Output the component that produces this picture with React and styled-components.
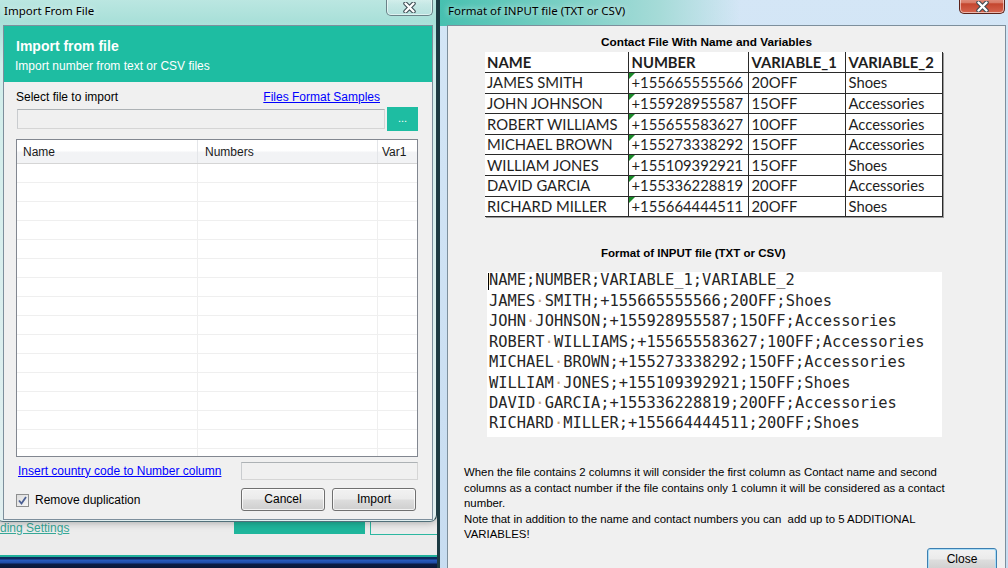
import React from "react";
import styled, { createGlobalStyle } from "styled-components";

const GlobalStyle = createGlobalStyle`
  html, body {
    margin: 0;
    padding: 0;
  }
  body {
    width: 1008px;
    height: 568px;
    overflow: hidden;
    background: #ececec;
    font-family: "Liberation Sans", Arial, sans-serif;
  }
`;

const Desktop = styled.div`
  position: relative;
  width: 1008px;
  height: 568px;
  overflow: hidden;
  display: flex;
  flex-direction: column;
  background: #ececec;
`;

const AppArea = styled.div`
  flex: 1;
  background: linear-gradient(180deg, #4fc3b3 0px, #9fdad2 60px, #ececec 140px);
`;

const BackStrip = styled.div`
  height: 37px;
  display: flex;
  align-items: flex-start;
  padding-top: 2px;
  box-sizing: border-box;
  gap: 5px;
`;

const BackLink = styled.span`
  flex: 0 0 229px;
  font-size: 12px;
  line-height: 14px;
  padding-top: 1px;
  color: #36a796;
  text-decoration: underline;
`;

const BackBar = styled.div`
  width: 131px;
  height: 14px;
  background: #1fb69c;
`;

const BackBox = styled.div`
  width: 70px;
  height: 14px;
  border-left: 1px solid #2cb7a1;
  border-bottom: 1px solid #2cb7a1;
`;

const Taskbar = styled.div`
  height: 11px;
  border-top: 2px solid #20b09b;
  background: linear-gradient(
    180deg,
    #0d2a5e 0px,
    #0d2a5e 2px,
    #2a5cc0 3px,
    #1d4aa4 6px,
    #0c1d46 7px,
    #0a1838 100%
  );
`;

const Window = styled.div`
  position: absolute;
  top: -6px;
  box-sizing: border-box;
  display: flex;
  flex-direction: column;
  border-radius: 7px;
`;

const LeftFrame = styled(Window)`
  left: -4px;
  width: 441px;
  height: 528px;
  padding: 0 3px 1px 6px;
  border: 1px solid #51707a;
  border-right-color: #1f3d44;
  background: linear-gradient(
    180deg,
    #bfe8e3 0px,
    #a9e0d9 26px,
    #d2eeeb 70px,
    #e1eff0 100%
  );
  box-shadow: 0 0 8px rgba(0, 0, 0, 0.35);
  z-index: 1;
`;

const RightFrame = styled(Window)`
  left: 437px;
  width: 576px;
  height: 600px;
  padding: 0 6px 0 7px;
  border: 1px solid #1f3d4a;
  border-left: 3px solid #1c3a42;
  border-radius: 3px 7px 7px 3px;
  background:
    linear-gradient(
        90deg,
        #47c0b0 0px,
        #79cfc4 120px,
        #a6dbd8 220px,
        rgba(210, 229, 246, 0) 300px
      )
      top left / 100% 31px no-repeat,
    linear-gradient(180deg, #d4e6f6 0%, #c7dcf0 100%);
  z-index: 2;
`;

const TitleBar = styled.div`
  height: 30px;
  display: flex;
  align-items: center;
  padding-left: ${(p) => p.$indent}px;
  font-family: "Segoe UI", "Noto Sans", sans-serif;
  font-size: 11.5px;
  color: #000;
  text-shadow: 0 0 6px rgba(255, 255, 255, 0.95);
`;

const CloseBtn = styled.div`
  position: absolute;
  top: -1px;
  left: ${(p) => p.$x}px;
  width: ${(p) => p.$w}px;
  height: ${(p) => p.$h}px;
  box-sizing: border-box;
  display: flex;
  align-items: center;
  justify-content: center;
  padding-top: 5px;
  border: 1px solid ${(p) => (p.$active ? "#5b2219" : "#6a8288")};
  border-top: none;
  border-radius: 0 0 5px 5px;
  background: ${(p) =>
    p.$active
      ? "linear-gradient(180deg, #eab0a4 0%, #d97b68 45%, #c4462f 52%, #d6654f 100%)"
      : "linear-gradient(180deg, rgba(255,255,255,0.55) 0%, rgba(215,236,236,0.45) 50%, rgba(190,225,225,0.5) 100%)"};
  box-shadow: inset 0 0 0 1px rgba(255, 255, 255, 0.55);
`;

const CloseGlyph = () => (
  <svg width="13" height="11" viewBox="0 0 13 11">
    <path d="M2.5 1.5 L10.5 9.5 M10.5 1.5 L2.5 9.5" stroke="#3b4a52" strokeWidth="4.4" strokeLinecap="round" />
    <path d="M2.5 1.5 L10.5 9.5 M10.5 1.5 L2.5 9.5" stroke="#fff" strokeWidth="2.4" strokeLinecap="round" />
  </svg>
);

const Client = styled.div`
  flex: 1;
  display: flex;
  flex-direction: column;
  min-height: 0;
  background: #f0f0f0;
  border: 1px solid #7d8f9c;
  overflow: hidden;
`;

/* ---------- Left dialog ---------- */

const Banner = styled.div`
  height: 56px;
  box-sizing: border-box;
  padding: 12px 0 0 12px;
  background: #1ebda2;
  color: #fff;
`;

const BannerTitle = styled.div`
  font-size: 14px;
  font-weight: bold;
  line-height: 17px;
`;

const BannerSub = styled.div`
  margin-top: 4px;
  margin-left: -1px;
  font-size: 12px;
  line-height: 15px;
`;

const Body = styled.div`
  display: flex;
  flex-direction: column;
  padding: 0 14px 0 12px;
  font-size: 12px;
  color: #000;
`;

const LabelRow = styled.div`
  margin-top: 8px;
  height: 14px;
  display: flex;
  justify-content: space-between;
  align-items: center;
  padding-right: 38px;
`;

const Link = styled.span`
  color: #0000ff;
  text-decoration: underline;
  cursor: pointer;
  margin-left: ${(p) => p.$ml || 0}px;
`;

const FileRow = styled.div`
  margin-top: 3px;
  height: 24px;
  display: flex;
  align-items: center;
  gap: 2px;
`;

const TextBox = styled.div`
  box-sizing: border-box;
  height: ${(p) => p.$h || 20}px;
  width: ${(p) => (p.$w ? `${p.$w}px` : "auto")};
  flex: ${(p) => (p.$w ? "0 0 auto" : "1")};
  margin-left: ${(p) => p.$ml || 0}px;
  background: #f0f0f0;
  border: 1px solid #d5d5d5;
  border-top-color: #adb2b5;
  border-left-color: #c9cccf;
`;

const BrowseBtn = styled.div`
  width: 31px;
  height: 24px;
  background: #1ebda2;
  color: #fff;
  font-size: 11px;
  display: flex;
  align-items: center;
  justify-content: center;
  padding-bottom: 2px;
  box-sizing: border-box;
`;

const ListView = styled.div`
  margin-top: 8px;
  height: 318px;
  box-sizing: border-box;
  border: 1px solid #828790;
  background: #fff;
  overflow: hidden;
`;

const ListHeader = styled.div`
  display: grid;
  grid-template-columns: 181px 180px 1fr;
  height: 24px;
  box-sizing: border-box;
  border-bottom: 1px solid #d5d5d5;
  background: linear-gradient(180deg, #ffffff 0%, #ffffff 45%, #f2f3f5 55%, #f2f3f5 100%);
`;

const HeaderCell = styled.div`
  display: flex;
  align-items: center;
  padding-left: 7px;
  border-right: 1px solid #e4e6e9;
  color: #1a1a1a;
  &:first-child {
    padding-left: 6px;
  }
  &:last-child {
    border-right: none;
    padding-left: 4px;
  }
`;

const ListRow = styled.div`
  display: grid;
  grid-template-columns: 181px 180px 1fr;
  height: 19px;
  box-sizing: border-box;
  border-bottom: 1px solid #efefef;
`;

const ListCell = styled.div`
  border-right: 1px solid #efefef;
  &:last-child {
    border-right: none;
  }
`;

const CountryRow = styled.div`
  margin-top: 5px;
  height: 17px;
  display: flex;
  align-items: center;
  justify-content: space-between;
`;

const ActionRow = styled.div`
  margin-top: 9px;
  height: 23px;
  display: flex;
  align-items: center;
`;

const CheckLabel = styled.label`
  display: flex;
  align-items: center;
  gap: 6px;
  flex: 1;
`;

const CheckBox = styled.span`
  width: 13px;
  height: 13px;
  box-sizing: border-box;
  border: 1px solid #8e8f8f;
  background: linear-gradient(135deg, #dcdcdc 0%, #f6f6f6 100%);
  display: flex;
  align-items: center;
  justify-content: center;
  margin-top: 1px;
`;

const WinButton = styled.button`
  width: ${(p) => p.$w || 84}px;
  height: 23px;
  padding: 0 0 1px;
  margin: 0;
  margin-left: ${(p) => p.$ml || 0}px;
  margin-right: ${(p) => p.$mr || 0}px;
  box-sizing: border-box;
  border: 1px solid ${(p) => (p.$default ? "#3c7fb1" : "#707070")};
  border-radius: 3px;
  background: linear-gradient(180deg, #f2f2f2 0%, #ebebeb 48%, #dddddd 52%, #cfcfcf 100%);
  box-shadow: inset 0 0 0 1px ${(p) => (p.$default ? "#a9dcf6" : "rgba(255,255,255,0.75)")};
  font-family: "Liberation Sans", Arial, sans-serif;
  font-size: 12px;
  color: #000;
`;

/* ---------- Right window ---------- */

const InfoBody = styled.div`
  display: flex;
  flex-direction: column;
  color: #000;
`;

const SectionTitle = styled.div`
  margin-left: 153px;
  margin-top: ${(p) => p.$mt}px;
  font-size: ${(p) => p.$size || 11.5}px;
  font-weight: bold;
  line-height: 14px;
`;

const Sheet = styled.table`
  margin-top: 3px;
  margin-left: 37px;
  border-collapse: collapse;
  background: #fff;
  font-family: Lato, "Open Sans", sans-serif;
  font-size: 14.8px;
  color: #1e1e1e;
  table-layout: fixed;
  width: 457px;
  box-shadow: 1px 1px 0 #9a9a9a;
`;

const SheetCell = styled.td`
  position: relative;
  height: 20.6px;
  padding: 0 0 0 ${(p) => (p.$col === 0 ? 2 : 3)}px;
  box-sizing: border-box;
  border-right: 1px solid #2a2a2a;
  border-bottom: 1px solid #2a2a2a;
  font-weight: ${(p) => (p.$head ? 700 : 400)};
  white-space: nowrap;
  overflow: hidden;
  line-height: 19px;
  vertical-align: middle;
  &::before {
    content: "";
    display: ${(p) => (p.$flag ? "block" : "none")};
    position: absolute;
    top: 0;
    left: 0;
    border-top: 6px solid #1b8a2a;
    border-right: 6px solid transparent;
  }
`;

const CodeBox = styled.div`
  position: relative;
  margin-top: 12px;
  margin-left: 39px;
  width: 455px;
  height: 165px;
  box-sizing: border-box;
  background: #fff;
  padding: 0 0 0 2px;
  overflow: hidden;
`;

const CodeText = styled.div`
  margin-top: -2px;
  font-family: "DejaVu Sans Mono", "Liberation Mono", monospace;
  font-size: 15.4px;
  line-height: 20.45px;
  color: #262626;
  white-space: pre;
`;

const Caret = styled.span`
  position: absolute;
  left: 1px;
  top: 1px;
  width: 1px;
  height: 17px;
  background: #000;
`;

const Dot = styled.span`
  color: #c9a27c;
`;

const Note = styled.p`
  margin: 28px 0 0 16px;
  font-size: 11.4px;
  line-height: 15.5px;
  color: #000;
`;

const NoteFooter = styled.div`
  margin-top: 5px;
  display: flex;
  justify-content: flex-end;
  padding-right: 8px;
`;

const sheetHead = ["NAME", "NUMBER", "VARIABLE_1", "VARIABLE_2"];
const sheetRows = [
  ["JAMES SMITH", "+155665555566", "20OFF", "Shoes"],
  ["JOHN JOHNSON", "+155928955587", "15OFF", "Accessories"],
  ["ROBERT WILLIAMS", "+155655583627", "10OFF", "Accessories"],
  ["MICHAEL BROWN", "+155273338292", "15OFF", "Accessories"],
  ["WILLIAM JONES", "+155109392921", "15OFF", "Shoes"],
  ["DAVID GARCIA", "+155336228819", "20OFF", "Accessories"],
  ["RICHARD MILLER", "+155664444511", "20OFF", "Shoes"],
];
const colWidths = [143, 120, 97, 97];

const codeLine = (r) => {
  const [first, last] = r[0].split(" ");
  return (
    <>
      {first}
      <Dot>·</Dot>
      {last};{r[1]};{r[2]};{r[3]}
    </>
  );
};

export default function App() {
  return (
    <>
      <GlobalStyle />
      <Desktop>
        <AppArea />
        <BackStrip>
          <BackLink>ding Settings</BackLink>
          <BackBar />
          <BackBox />
        </BackStrip>
        <Taskbar />

        <LeftFrame>
          <TitleBar $indent={1}>Import From File</TitleBar>
          <CloseBtn $x={389} $w={47} $h={22}>
            <CloseGlyph />
          </CloseBtn>
          <Client>
            <Banner>
              <BannerTitle>Import from file</BannerTitle>
              <BannerSub>Import number from text or CSV files</BannerSub>
            </Banner>
            <Body>
              <LabelRow>
                <span>Select file to import</span>
                <Link>Files Format Samples</Link>
              </LabelRow>
              <FileRow>
                <TextBox $ml={1} />
                <BrowseBtn>...</BrowseBtn>
              </FileRow>
              <ListView>
                <ListHeader>
                  <HeaderCell>Name</HeaderCell>
                  <HeaderCell>Numbers</HeaderCell>
                  <HeaderCell>Var1</HeaderCell>
                </ListHeader>
                {Array.from({ length: 16 }).map((_, i) => (
                  <ListRow key={i}>
                    <ListCell />
                    <ListCell />
                    <ListCell />
                  </ListRow>
                ))}
              </ListView>
              <CountryRow>
                <Link $ml={2}>Insert country code to Number column</Link>
                <TextBox $w={177} $h={18} />
              </CountryRow>
              <ActionRow>
                <CheckLabel>
                  <CheckBox>
                    <svg width="9" height="9" viewBox="0 0 9 9">
                      <path d="M1 4.5 L3.5 7.5 L8 1" fill="none" stroke="#4b5f93" strokeWidth="1.8" />
                    </svg>
                  </CheckBox>
                  Remove duplication
                </CheckLabel>
                <WinButton>Cancel</WinButton>
                <WinButton $ml={7} $mr={2}>
                  Import
                </WinButton>
              </ActionRow>
            </Body>
          </Client>
        </LeftFrame>

        <RightFrame>
          <TitleBar $indent={1}>Format of INPUT file (TXT or CSV)</TitleBar>
          <CloseBtn $x={519} $w={46} $h={20} $active>
            <CloseGlyph />
          </CloseBtn>
          <Client>
            <InfoBody>
              <SectionTitle $mt={9} $size={11.8}>
                Contact File With Name and Variables
              </SectionTitle>
              <Sheet>
                <colgroup>
                  {colWidths.map((w, i) => (
                    <col key={i} style={{ width: w }} />
                  ))}
                </colgroup>
                <tbody>
                  <tr>
                    {sheetHead.map((h, i) => (
                      <SheetCell key={h} $head $col={i}>
                        {h}
                      </SheetCell>
                    ))}
                  </tr>
                  {sheetRows.map((r) => (
                    <tr key={r[0]}>
                      {r.map((c, i) => (
                        <SheetCell key={i} $col={i} $flag={i === 1}>
                          {c}
                        </SheetCell>
                      ))}
                    </tr>
                  ))}
                </tbody>
              </Sheet>

              <SectionTitle $mt={29}>Format of INPUT file (TXT or CSV)</SectionTitle>
              <CodeBox>
                <Caret />
                <CodeText>
                  {"NAME;NUMBER;VARIABLE_1;VARIABLE_2"}
                  {sheetRows.map((r) => (
                    <div key={r[0]}>{codeLine(r)}</div>
                  ))}
                </CodeText>
              </CodeBox>

              <Note>
                When the file contains 2 columns it will consider the first column as Contact name and second
                <br />
                columns as a contact number if the file contains only 1 column it will be considered as a contact
                <br />
                number.
                <br />
                Note that in addition to the name and contact numbers you can&nbsp; add up to 5 ADDITIONAL
                <br />
                VARIABLES!
              </Note>
              <NoteFooter>
                <WinButton $w={70} $default>
                  Close
                </WinButton>
              </NoteFooter>
            </InfoBody>
          </Client>
        </RightFrame>
      </Desktop>
    </>
  );
}
